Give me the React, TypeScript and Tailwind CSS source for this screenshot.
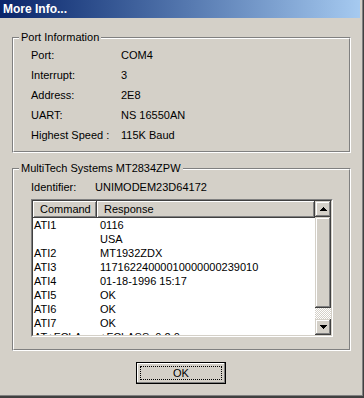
import React from 'react';

const portRows: [string, string][] = [
    ['Port:', 'COM4'],
    ['Interrupt:', '3'],
    ['Address:', '2E8'],
    ['UART:', 'NS 16550AN'],
    ['Highest Speed :', '115K Baud'],
];

const responses: [string, string][] = [
    ['ATI1', '0116'],
    ['', 'USA'],
    ['ATI2', 'MT1932ZDX'],
    ['ATI3', '11716224000010000000239010'],
    ['ATI4', '01-18-1996 15:17'],
    ['ATI5', 'OK'],
    ['ATI6', 'OK'],
    ['ATI7', 'OK'],
    ['AT+FCLA...', '+FCLASS: 0,2.0'],
];

type GroupBoxProps = {
    label: string;
    className: string;
    children: React.ReactNode;
};

// etched frame: gray line outside, white line inside, label sits on the top edge
const GroupBox: React.FC<GroupBoxProps> = ({ label, className, children }) => (
    <div
        className={`relative ml-[12px] w-[339px] border border-t-[#808080] border-l-[#808080] border-r-white border-b-white ${className}`}
    >
        <div className="h-full border border-t-white border-l-white border-r-[#808080] border-b-[#808080]">
            {children}
        </div>
        <span className="absolute -top-[7px] left-[6px] px-[2px] bg-[#d4d0c8] leading-[13px] whitespace-nowrap">
            {label}
        </span>
    </div>
);

const Arrow: React.FC<{ down?: boolean }> = ({ down }) => (
    <svg width="7" height="4" viewBox="0 0 7 4" shapeRendering="crispEdges" className={down ? 'rotate-180' : ''}>
        <path d="M3 0h1v1H3zM2 1h3v1H2zM1 2h5v1H1zM0 3h7v1H0z" fill="#000" />
    </svg>
);

const bevel =
    'shadow-[inset_-1px_-1px_#404040,inset_1px_1px_#d4d0c8,inset_-2px_-2px_#808080,inset_2px_2px_#fff] bg-[#d4d0c8]';

const ScrollBar: React.FC = () => (
    <div className="w-[16px] flex flex-col shrink-0">
        <div className={`h-[16px] flex items-center justify-center ${bevel}`}>
            <Arrow />
        </div>
        <div className={`h-[91px] ${bevel}`} />
        <div className="flex-1 bg-[image:repeating-conic-gradient(#fff_0_25%,#d4d0c8_0_50%)] bg-[length:2px_2px]" />
        <div className={`h-[16px] flex items-center justify-center ${bevel}`}>
            <Arrow down />
        </div>
    </div>
);

const headerCell =
    'h-full flex items-center pl-[7px] bg-[#d4d0c8] shadow-[inset_-1px_-1px_#404040,inset_1px_1px_#fff,inset_-2px_-2px_#808080]';

export default function App() {
    return (
        <div className="w-[364px] h-[398px] border-r border-b-2 border-r-[#404040] border-b-[#404040] font-['Liberation_Sans',Arial,sans-serif] text-[11px] text-black">
            <div className="h-full border-r border-b border-r-[#808080] border-b-[#808080] bg-[#d4d0c8] flex flex-col">
                {/* Title bar */}
                <div className="h-[18px] mr-[2px] flex items-center pl-[3px] bg-linear-to-r from-[#0a246a] to-[#a6caf0] text-white font-bold text-[12px]">
                    More Info...
                </div>

                {/* Port information */}
                <GroupBox label="Port Information" className="mt-[19px] h-[116px]">
                    <div className="pt-[6px] pl-[17px]">
                        {portRows.map(([k, v]) => (
                            <div key={k} className="grid grid-cols-[90px_1fr] h-[20px] items-center">
                                <div>{k}</div>
                                <div>{v}</div>
                            </div>
                        ))}
                    </div>
                </GroupBox>

                {/* Modem */}
                <GroupBox label="MultiTech Systems MT2834ZPW" className="mt-[15px] h-[183px]">
                    <div className="pt-[9px] pl-[17px]">
                        <div className="grid grid-cols-[64px_1fr] h-[14px] items-center">
                            <div>Identifier:</div>
                            <div>UNIMODEM23D64172</div>
                        </div>
                        <div className="mt-[6px] w-[302px] h-[138px] border border-t-[#808080] border-l-[#808080] border-r-white border-b-white">
                            <div className="h-full border border-t-[#404040] border-l-[#404040] border-r-[#d4d0c8] border-b-[#d4d0c8] bg-white flex">
                                <div className="w-[282px] shrink-0 overflow-hidden">
                                    <div className="grid grid-cols-[64px_218px] h-[17px]">
                                        <div className={headerCell}>Command</div>
                                        <div className={headerCell}>Response</div>
                                    </div>
                                    {responses.map(([cmd, resp], i) => (
                                        <div key={i} className="grid grid-cols-[64px_218px] h-[14px] items-center">
                                            <div className="pl-[1px] whitespace-nowrap overflow-hidden">{cmd}</div>
                                            <div className="pl-[3px] whitespace-nowrap overflow-hidden">{resp}</div>
                                        </div>
                                    ))}
                                </div>
                                <ScrollBar />
                            </div>
                        </div>
                    </div>
                </GroupBox>

                {/* OK button */}
                <div className="mt-[11px] flex justify-center">
                    <button
                        type="button"
                        className="w-[90px] h-[22px] border border-black bg-[#d4d0c8] shadow-[inset_-1px_-1px_#808080,inset_1px_1px_#fff] p-[3px]"
                    >
                        <div className="h-full border border-dotted border-black flex items-center justify-center">
                            OK
                        </div>
                    </button>
                </div>
            </div>
        </div>
    );
}
